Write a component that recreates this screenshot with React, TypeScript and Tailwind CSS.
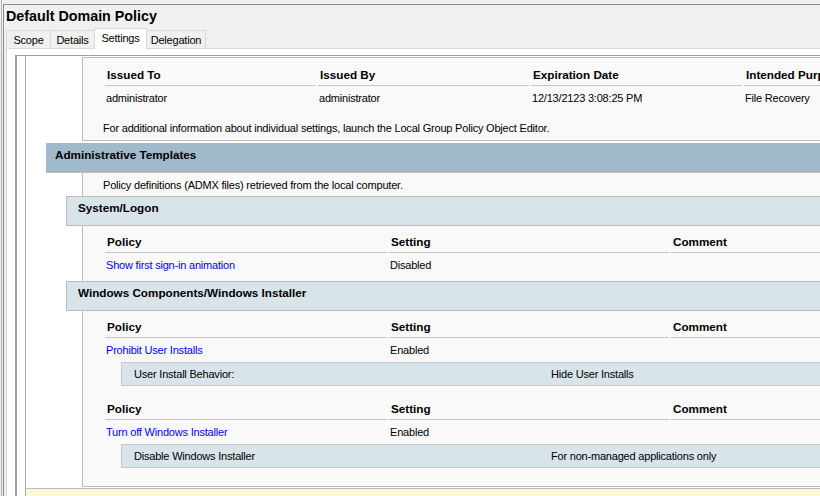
import type { ReactNode } from "react";

const TABS = [
  { label: "Scope", width: "w-[45px]" },
  { label: "Details", width: "w-[45px]" },
  { label: "Settings", width: "w-[53px]", active: true },
  { label: "Delegation", width: "w-[60px]" },
];

type PolicyRow = {
  name: string;
  setting: string;
  detail?: { label: string; value: string };
};

function HeaderCell({ children }: { children?: ReactNode }) {
  return (
    <div className="h-[21px] border-b border-[#c4c4c4] pl-[2px] text-[11.7px] font-bold leading-[20px] tracking-normal whitespace-nowrap">
      {children}
    </div>
  );
}

function SectionBar({ title }: { title: string }) {
  return (
    <div className="-ml-[17px] h-[30px] border-y border-l border-[#bbbbbb] bg-[#d9e3ea] pl-[11px] text-[11.7px] font-bold leading-[22px] tracking-normal">
      {title}
    </div>
  );
}

function PolicyTable({ row }: { row: PolicyRow }) {
  return (
    <div>
      <div className="grid grid-cols-[282px_280px_400px] gap-x-[2px]">
        <HeaderCell>Policy</HeaderCell>
        <HeaderCell>Setting</HeaderCell>
        <HeaderCell>Comment</HeaderCell>
      </div>
      <div className="mt-[2px] grid h-[20px] grid-cols-[282px_280px_400px] gap-x-[2px] leading-[20px]">
        <div className="pl-[1px] text-[#0000ff]">{row.name}</div>
        <div className="pl-[1px]">{row.setting}</div>
        <div />
      </div>
      {row.detail ? (
        <div className="mt-[2px] ml-[16px] grid h-[24px] grid-cols-[417px_1fr] border-y border-l border-[#c8c8c8] bg-[#d9e3ea] pl-[12px] leading-[22px]">
          <div>{row.detail.label}</div>
          <div>{row.detail.value}</div>
        </div>
      ) : null}
    </div>
  );
}

export default function App() {
  return (
    <div className="h-[496px] w-[820px] overflow-hidden bg-[#f0f0f0] pl-px font-['Liberation_Sans',Arial,sans-serif] text-[11px] tracking-[-0.2px] text-black">
      <div className="h-full border-l border-[#b4b4b4] pl-px pt-[4px]">
        <div className="flex h-full flex-col border-l border-t border-[#8c8c8c]">
          <div className="h-[23px] shrink-0 pl-[2px] pt-px text-[14.3px] font-bold leading-[21px] tracking-normal">
            Default Domain Policy
          </div>

          <div className="flex min-h-0 flex-1 flex-col pl-[2px]">
            <div className="flex h-[20px] shrink-0 items-end">
              {TABS.map((tab, index) => (
                <div
                  key={tab.label}
                  className={`${tab.width} ${index > 0 ? "-ml-px" : ""} border-x border-t border-[#d9d9d9] text-center ${
                    tab.active
                      ? "relative z-10 -mb-px h-[21px] bg-white leading-[19px]"
                      : "h-[18px] bg-[#f0f0f0] leading-[18px]"
                  }`}
                >
                  {tab.label}
                </div>
              ))}
            </div>

            <div className="min-h-0 flex-1 border-l border-t border-[#d9d9d9] bg-white pl-[8px] pt-[6px]">
              <div className="h-full border-l-2 border-t border-[#a0a0a0] pl-[8px]">
                <div className="h-full overflow-hidden border-l border-[#a8a8a8] bg-white pt-px">
                  {/* certificate table */}
                  <div className="ml-[56px] border-y border-l border-[#bbbbbb] bg-[#f9f9f9] pb-[3px] pl-[22px] pt-[7px]">
                    <div className="grid grid-cols-[211px_211px_211px_211px] gap-x-[2px]">
                      <HeaderCell>Issued To</HeaderCell>
                      <HeaderCell>Issued By</HeaderCell>
                      <HeaderCell>Expiration Date</HeaderCell>
                      <HeaderCell>Intended Purposes</HeaderCell>
                    </div>
                    <div className="mt-[2px] grid h-[20px] grid-cols-[211px_211px_211px_211px] gap-x-[2px] leading-[20px]">
                      <div className="pl-[1px]">administrator</div>
                      <div className="pl-[1px]">administrator</div>
                      <div className="pl-[1px]">12/13/2123 3:08:25 PM</div>
                      <div className="pl-[1px]">File Recovery</div>
                    </div>
                    <div className="-ml-[2px] mt-[11px] leading-[18px]">
                      For additional information about individual settings, launch the Local Group Policy Object
                      Editor.
                    </div>
                  </div>

                  <div className="ml-[20px] mt-[2px] h-[30px] border-b border-[#bbbbbb] bg-[#a0bacb] pl-[9px] pt-px text-[11.7px] font-bold leading-[22px] tracking-normal">
                    Administrative Templates
                  </div>

                  <div className="ml-[56px] border-b border-l border-[#bbbbbb] bg-[#f9f9f9] pb-[18px] pl-[22px]">
                    <div className="-ml-[2px] pt-[3px] leading-[18px]">
                      Policy definitions (ADMX files) retrieved from the local computer.
                    </div>

                    <div className="-ml-[22px] mt-[2px]">
                      <SectionBar title="System/Logon" />
                    </div>
                    <div className="py-[6px]">
                      <PolicyTable row={{ name: "Show first sign-in animation", setting: "Disabled" }} />
                    </div>

                    <div className="-ml-[22px]">
                      <SectionBar title="Windows Components/Windows Installer" />
                    </div>
                    <div className="pt-[6px]">
                      <PolicyTable
                        row={{
                          name: "Prohibit User Installs",
                          setting: "Enabled",
                          detail: { label: "User Install Behavior:", value: "Hide User Installs" },
                        }}
                      />
                    </div>
                    <div className="pt-[13px]">
                      <PolicyTable
                        row={{
                          name: "Turn off Windows Installer",
                          setting: "Enabled",
                          detail: { label: "Disable Windows Installer", value: "For non-managed applications only" },
                        }}
                      />
                    </div>
                  </div>

                  <div className="mt-px h-[30px] border-t border-[#bbbbbb] bg-[#fef7d6]" />
                </div>
              </div>
            </div>
          </div>
        </div>
      </div>
    </div>
  );
}
